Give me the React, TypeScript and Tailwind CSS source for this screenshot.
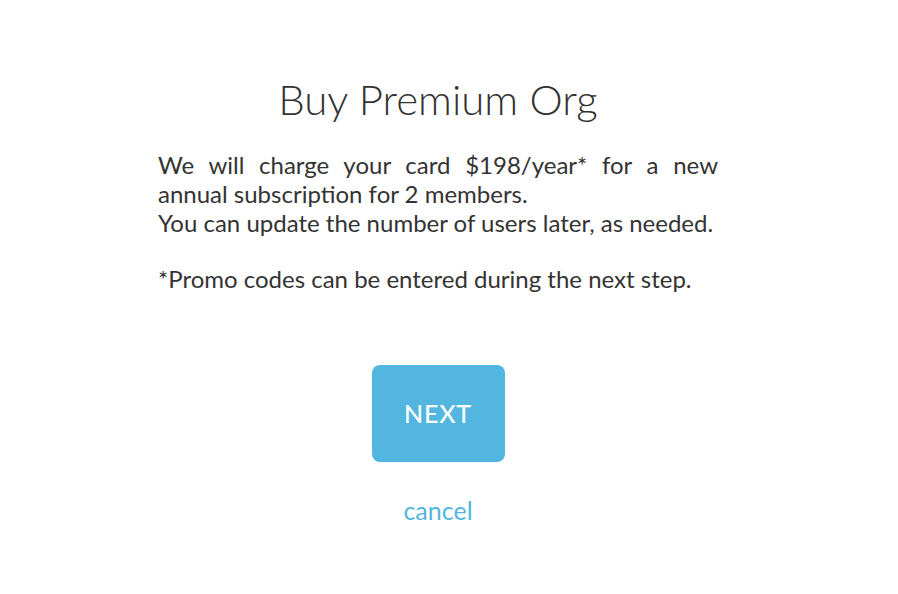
export default function App() {
  return (
    <div className="flex h-[594px] w-[876px] flex-col items-center bg-white font-['Lato',sans-serif] text-[#333]">
      <h1 className="mt-[71px] text-[42px] font-light leading-[56px]">
        Buy Premium Org
      </h1>
      <div className="mt-[23px] w-[560px] text-[24px] leading-[29px]">
        <p className="text-justify [text-align-last:left]">
          We will charge your card $198/year* for a new annual subscription for
          2 members.
        </p>
        <p>You can update the number of users later, as needed.</p>
        <p className="mt-[27px]">
          *Promo codes can be entered during the next step.
        </p>
      </div>
      <button className="mt-[72px] h-[97px] w-[133px] rounded-[8px] bg-[#52b6e0] text-[25px] font-medium tracking-[0.8px] text-white">
        NEXT
      </button>
      <a className="mt-[30px] text-[25px] text-[#52b6e0]" href="#">
        cancel
      </a>
    </div>
  );
}
